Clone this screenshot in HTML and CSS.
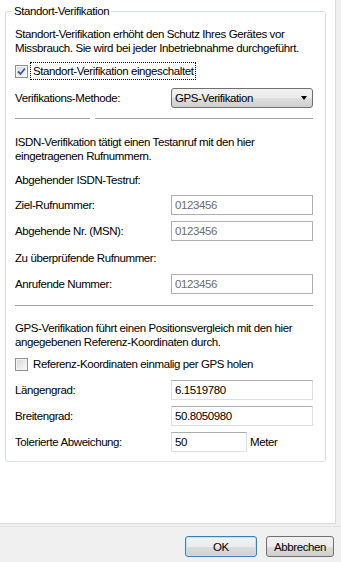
FILE: index.html
```html
<!DOCTYPE html>
<html lang="de">
<head>
<meta charset="utf-8">
<link rel="stylesheet" href="styles.css">
</head>
<body>
<div class="dialog">
  <div class="panel">
    <fieldset class="group">
      <legend class="legend">Standort-Verifikation</legend>
      <p class="para">Standort-Verifikation erhöht den Schutz Ihres Gerätes vor Missbrauch. Sie wird bei jeder Inbetriebnahme durchgeführt.</p>
      <div class="check-row first-check">
        <span class="checkbox">
          <svg width="9" height="9" viewBox="0 0 9 9"><path d="M1 4.5 L3.5 7 L8 1.5" fill="none" stroke="#3d5a9e" stroke-width="1.8"/></svg>
        </span>
        <span class="check-label focused">Standort-Verifikation eingeschaltet</span>
      </div>
      <div class="row method-row">
        <span class="label">Verifikations-Methode:</span>
        <div class="select">
          <span>GPS-Verifikation</span>
          <span class="arrow"></span>
        </div>
      </div>
      <div class="sep-split">
        <span class="sep-short"></span>
        <span class="sep-long"></span>
      </div>

      <p class="para isdn-para">ISDN-Verifikation tätigt einen Testanruf mit den hier eingetragenen Rufnummern.</p>
      <div class="heading">Abgehender ISDN-Testruf:</div>
      <div class="rows">
        <div class="row"><span class="label">Ziel-Rufnummer:</span><div class="input disabled">0123456</div></div>
        <div class="row"><span class="label">Abgehende Nr. (MSN):</span><div class="input disabled">0123456</div></div>
      </div>
      <div class="heading heading2">Zu überprüfende Rufnummer:</div>
      <div class="row anruf-row"><span class="label">Anrufende Nummer:</span><div class="input disabled">0123456</div></div>
      <div class="sep"></div>

      <p class="para gps-para">GPS-Verifikation führt einen Positionsvergleich mit den hier angegebenen Referenz-Koordinaten durch.</p>
      <div class="check-row gps-check">
        <span class="checkbox"></span>
        <span class="check-label">Referenz-Koordinaten einmalig per GPS holen</span>
      </div>
      <div class="rows gps-rows">
        <div class="row"><span class="label">Längengrad:</span><div class="input">6.1519780</div></div>
        <div class="row"><span class="label">Breitengrad:</span><div class="input">50.8050980</div></div>
        <div class="row"><span class="label">Tolerierte Abweichung:</span><div class="input short">50</div><span class="unit">Meter</span></div>
      </div>
    </fieldset>
  </div>
  <div class="footer">
    <button class="btn default">OK</button>
    <button class="btn">Abbrechen</button>
  </div>
</div>
</body>
</html>
```
FILE: styles.css
```css
html, body {
  margin: 0;
  padding: 0;
  background: #f0f0f0;
  font-family: "Liberation Sans", Arial, sans-serif;
  font-size: 11.5px;
  letter-spacing: -0.4px;
  color: #000;
}
.dialog {
  width: 341px;
  height: 562px;
  display: flex;
  flex-direction: column;
}
.panel {
  width: 336px;
  height: 524px;
  background: #fff;
  border-right: 1px solid #d9d9d9;
  border-bottom: 1px solid #d9d9d9;
  padding-top: 4px;
  box-sizing: border-box;
}
.group {
  margin: 0 0 0 5px;
  width: 321px;
  box-sizing: border-box;
  border: 1px solid #d5dfe5;
  border-radius: 3px;
  padding: 9px 11px 9px 9px;
}
.legend {
  padding: 0 2px;
  margin-left: -3px;
  line-height: 14px;
}
.para {
  margin: 0;
  line-height: 14px;
}
.check-row {
  display: flex;
  align-items: center;
  height: 16px;
  margin-top: 8px;
}
.checkbox {
  width: 13px;
  height: 13px;
  box-sizing: border-box;
  border: 1px solid #8e8f8f;
  background: linear-gradient(135deg, #d8d8d8 0%, #f0f0f0 70%, #fafafa 100%);
  box-shadow: inset 0 0 0 1px #f4f4f4;
  display: flex;
  align-items: center;
  justify-content: center;
  flex: none;
}
.check-label {
  margin-left: 3px;
  padding: 1px 1px 1px 2px;
  line-height: 14px;
}
.check-label.focused {
  outline: 1px dotted #000;
  outline-offset: 0;
}
.row {
  display: flex;
  align-items: center;
  height: 20px;
}
.label {
  width: 156px;
  flex: none;
}
.method-row {
  margin-top: 9px;
}
.select {
  width: 142px;
  height: 20px;
  box-sizing: border-box;
  border: 1px solid #707070;
  border-radius: 3px;
  background: linear-gradient(#f2f2f2 0%, #ebebeb 50%, #dddddd 51%, #cfcfcf 100%);
  display: flex;
  align-items: center;
  justify-content: space-between;
  padding: 0 5px 0 3px;
}
.arrow {
  width: 0;
  height: 0;
  border-left: 3.5px solid transparent;
  border-right: 3.5px solid transparent;
  border-top: 4px solid #000;
}
.sep-split {
  display: flex;
  margin-top: 10px;
  height: 1px;
}
.sep-short {
  width: 75px;
  background: #a0a0a0;
}
.sep-long {
  margin-left: 5px;
  width: 218px;
  background: #a0a0a0;
}
.sep {
  margin-top: 11px;
  height: 1px;
  width: 298px;
  background: #a0a0a0;
}
.isdn-para {
  margin-top: 16px;
}
.heading {
  margin-top: 10px;
  line-height: 14px;
}
.rows {
  display: flex;
  flex-direction: column;
  gap: 6px;
  margin-top: 8px;
}
.heading2 {
  margin-top: 10px;
}
.anruf-row {
  margin-top: 9px;
}
.input {
  width: 142px;
  height: 20px;
  box-sizing: border-box;
  border: 1px solid #dbdfe6;
  border-top-color: #abadb3;
  background: #fff;
  padding: 0 3px;
  line-height: 18px;
  flex: none;
}
.input.disabled {
  border-color: #afafaf;
  color: #6d6d6d;
}
.input.short {
  width: 76px;
}
.unit {
  margin-left: 3px;
}
.gps-para {
  margin-top: 15px;
}
.gps-check {
  margin-top: 7px;
}
.gps-rows {
  margin-top: 8px;
}
.footer {
  margin-top: 2px;
  border-top: 1px solid #dfe3e8;
  display: flex;
  justify-content: flex-end;
  gap: 9px;
  padding: 9px 7px 0 0;
}
.btn {
  font-family: "Liberation Sans", Arial, sans-serif;
  font-size: 11.5px;
  letter-spacing: -0.4px;
  height: 21px;
  width: 68px;
  padding: 0;
  border: 1px solid #707070;
  border-radius: 3px;
  background: linear-gradient(#f2f2f2 0%, #ebebeb 50%, #dddddd 51%, #cfcfcf 100%);
  color: #000;
}
.btn.default {
  width: 72px;
  border-color: #3c7fb1;
  box-shadow: inset 0 0 0 1px #b6e6fb;
}
```
